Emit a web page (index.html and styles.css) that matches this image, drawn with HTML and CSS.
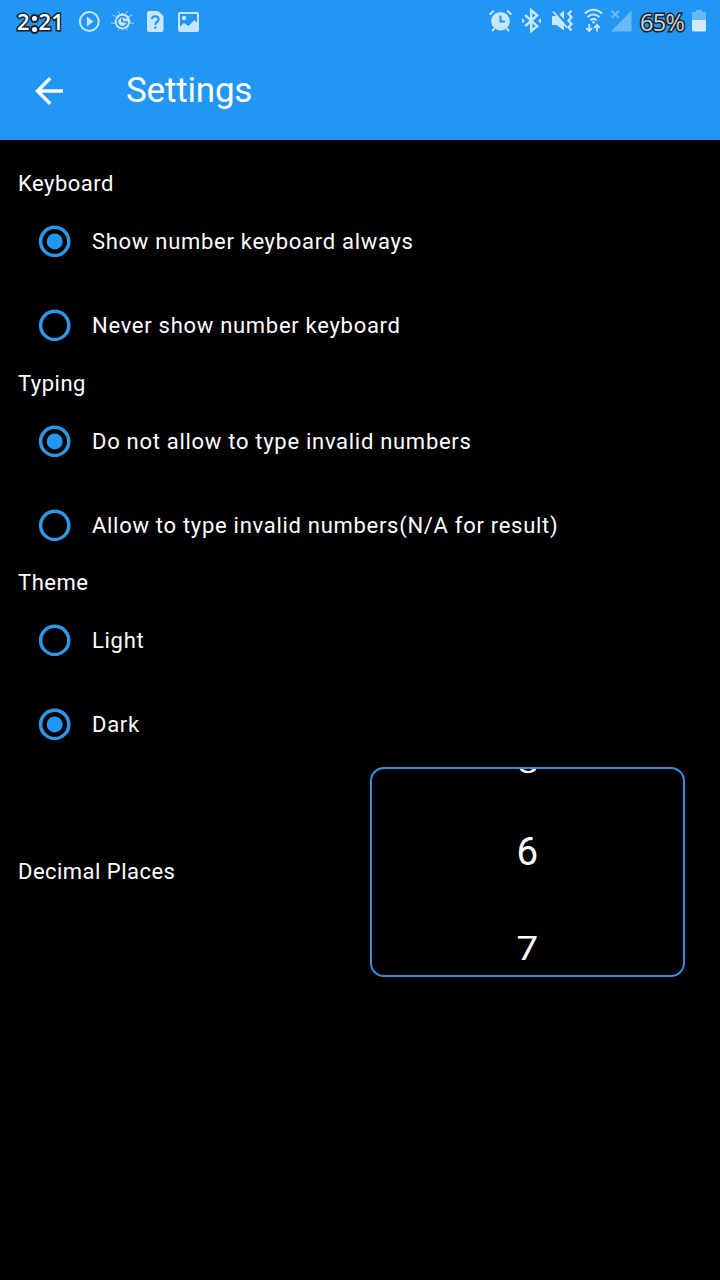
FILE: index.html
```html
<!DOCTYPE html>
<html lang="en">
<head>
<meta charset="utf-8">
<title>Settings</title>
<link rel="stylesheet" href="styles.css">
</head>
<body>
<svg class="symbols" width="0" height="0">
  <symbol id="radio-off" viewBox="0 0 32 32"><circle cx="15.700" cy="16.400" r="14.100" fill="none" stroke="#2f95e5" stroke-width="3.500"/></symbol>
  <symbol id="radio-on" viewBox="0 0 32 32"><circle cx="15.700" cy="16.400" r="14.100" fill="none" stroke="#2f95e5" stroke-width="3.500"/><circle cx="15.700" cy="16.400" r="8" fill="#2196f3"/></symbol>
</svg>
<header class="top">
  <div class="status">
    <span class="clock">2<span class="colon"><i></i><i></i></span>21</span>
    <svg class="notifications" width="140" height="44" viewBox="75 0 140 44" fill="#c7e5fc">
      <circle cx="89.3" cy="21.5" r="9.4" fill="none" stroke="#c7e5fc" stroke-width="2"/>
      <path d="M86.800 16.600v9.800l6.800-4.900z"/>
      <path d="M122.500 13l6.200 3 1.800 5.500-2.400 6-5.600 2.300-6-2.500-2-5.800 2.300-5.700z"/>
      <path d="M118 11l2 3M127.500 11l-2 3M112.500 14.800l4 2M132.500 14.800l-4 2M111 23.200h4M130 23.200h4M118 30.500l2-2.500M127.500 30.500l-2-2.500" fill="none" stroke="#a5d3fa" stroke-width="1"/>
      <path d="M126.300 18.500a5 5 0 1 0 .7 5.200v-1.700h-4.500M122 18.200v3.800" fill="none" stroke="#2b91e3" stroke-width="1.700"/>
      <path d="M149 11h9l5.500 5v14q0 2-2 2H149q-2 0-2-2V13q0-2 2-2z"/>
      <path d="M151.800 19.300q.2-3 3.400-3 3.400 0 3.400 3 0 1.500-1.800 2.800-1.500 1.200-1.500 2.800M155.300 26.600v2.200" fill="none" stroke="#2196f3" stroke-width="2"/>
      <path fill-rule="evenodd" d="M180 12h17q2 0 2 2v16q0 2-2 2h-17q-2 0-2-2V14q0-2 2-2zm0 2v12.500l4-3.500 4.500 3 6-6 2.500 3v-9z"/>
      <circle cx="184" cy="18" r="2.200"/>
    </svg>
    <svg class="indicators" width="152" height="44" viewBox="486 0 152 44" fill="#c7e5fc">
      <circle cx="500.500" cy="21.200" r="9.300"/>
      <path d="M489.600 14.500l4.200-3.800M511.400 14.500l-4.200-3.800M494.500 28.500l-2.500 2.500M506.500 28.500l2.500 2.500" fill="none" stroke="#c7e5fc" stroke-width="2"/>
      <path d="M500.500 15.500v6h4.500" fill="none" stroke="#2196f3" stroke-width="2"/>
      <path d="M525.200 15.200l12 11-6 4.800V10.200l6 5-12 11" fill="none" stroke="#c7e5fc" stroke-width="2.500"/>
      <path d="M522 18.200l3 2.600-3 2.600zM541 18.200l-3 2.600 3 2.600z"/>
      <path d="M552 16h4.500l7.500 8v6.500l-7.500-5.500H552zM559.500 14.500l4.500-4v8.500z"/>
      <path d="M553 11.500l14 16" fill="none" stroke="#c7e5fc" stroke-width="1.800"/>
      <path d="M571.500 10.800l-3 3 3 3.400-3 3.300 3 3.500-3 3.300 3 3.200" fill="none" stroke="#c7e5fc" stroke-width="2.300"/>
      <path d="M584.800 13.500q8.700-7.500 17.400 0M587.500 17q6-5 12 0M590.300 20.200q3.200-2.500 6.400 0" fill="none" stroke="#c7e5fc" stroke-width="2"/>
      <circle cx="593.500" cy="22.300" r="1.200"/>
      <path d="M589.200 24v6.500M586.300 28l2.900 3.200 2.900-3.200M597 31.500V25M594.100 28l2.900-3.200 2.900 3.200" fill="none" stroke="#c7e5fc" stroke-width="1.800"/>
      <path d="M631.500 10.500v21H611z" fill="#6bb8f7"/>
      <path d="M611.500 10.800l7.500 7M619 10.800l-7.500 7" fill="none" stroke="#6bb8f7" stroke-width="2"/>
    </svg>
    <span class="percent">65%</span>
    <svg class="battery" width="14" height="44" viewBox="692 0 14 44">
      <path d="M696 10h6v2h4v8.500h-14V12h4z" fill="#6bb8f7"/>
      <path d="M692 20h14v10q0 1.500-1.500 1.500h-11q-1.500 0-1.500-1.500z" fill="#d3eafd"/>
    </svg>
  </div>
  <div class="appbar">
    <svg class="back" width="28" height="28" viewBox="0 0 28 28" fill="none" stroke="#fff" stroke-width="3.400"><path d="M28 14H2.500M15.200 1.300L2.500 14l12.700 12.700"/></svg>
    <h1 class="title">Settings</h1>
  </div>
</header>
<main class="settings">
  <section class="group keyboard">
    <h2 class="heading">Keyboard</h2>
    <div class="option"><svg class="radio"><use href="#radio-on"/></svg><span class="label">Show number keyboard always</span></div>
    <div class="option"><svg class="radio"><use href="#radio-off"/></svg><span class="label">Never show number keyboard</span></div>
  </section>
  <section class="group">
    <h2 class="heading">Typing</h2>
    <div class="option"><svg class="radio"><use href="#radio-on"/></svg><span class="label">Do not allow to type invalid numbers</span></div>
    <div class="option"><svg class="radio"><use href="#radio-off"/></svg><span class="label">Allow to type invalid numbers(N/A for result)</span></div>
  </section>
  <section class="group">
    <h2 class="heading">Theme</h2>
    <div class="option"><svg class="radio"><use href="#radio-off"/></svg><span class="label">Light</span></div>
    <div class="option"><svg class="radio"><use href="#radio-on"/></svg><span class="label">Dark</span></div>
  </section>
  <div class="decimals">
    <span class="caption">Decimal Places</span>
    <div class="picker">
      <span class="digit previous">5</span>
      <span class="digit">6</span>
      <span class="digit next">7</span>
    </div>
  </div>
</main>
</body>
</html>
```
FILE: styles.css
```css
* { box-sizing: border-box; }
body {
  margin: 0;
  width: 720px;
  height: 1280px;
  overflow: hidden;
  background: #000;
  color: #fff;
  font-family: Roboto, "Liberation Sans", sans-serif;
}
.symbols { display: block; height: 0; }
.top { height: 140px; background: #2196f3; }
.status { display: flex; height: 42px; padding-left: 17px; }
.clock, .percent {
  display: flex;
  flex: none;
  font-family: "Open Sans", sans-serif;
  line-height: 42px;
  paint-order: stroke fill;
  -webkit-text-stroke: 3px #14242f;
}
.clock { width: 58px; font-size: 22px; font-weight: 600; }
.colon {
  display: flex;
  flex-direction: column;
  gap: 2px;
  padding-top: 14px;
  width: 9px;
}
.colon i { width: 9px; height: 9px; border: 2px solid #14242f; border-radius: 50%; background: #fff; }
.notifications, .indicators, .battery { flex: none; }
.indicators { margin-left: 271px; }
.percent { width: 52px; padding-left: 2px; font-size: 23.500px; font-weight: 500; color: #d0d0d0; line-height: 44px; letter-spacing: -0.700px; }
.battery { margin-left: 2px; }
.appbar { display: flex; align-items: center; height: 98px; padding-left: 35px; }
.back { margin-right: 63px; }
.title { margin: 0; font-size: 35px; font-weight: 400; line-height: 42px; letter-spacing: -0.200px; }
.settings { padding: 27px 34.600px 0 18px; }
.group { height: 199px; }
.keyboard { height: 200px; }
.heading, .label, .caption { margin: 0; font-size: 22px; font-weight: 400; letter-spacing: 0.710px; white-space: nowrap; }
.heading { height: 32px; line-height: 34px; letter-spacing: 0.500px; }
.option { display: flex; align-items: center; gap: 21px; height: 84px; padding-left: 21px; }
.radio { flex: none; width: 32px; height: 32px; }
.decimals { display: flex; align-items: center; justify-content: space-between; padding-top: 2px; }
.caption { padding-bottom: 2px; letter-spacing: 0.470px; }
.picker {
  display: flex;
  flex-direction: column;
  align-items: center;
  justify-content: center;
  width: 315px;
  height: 210px;
  padding: 0 1px 42px 0;
  border: 2px solid #3b8fd6;
  border-radius: 14px;
  overflow: hidden;
}
.digit { flex: none; height: 97px; font-size: 38.500px; line-height: 97px; }
.previous { height: 86px; margin-top: 11px; transform: scaleY(0.700); }
.next { transform: scaleY(0.850); }
```
